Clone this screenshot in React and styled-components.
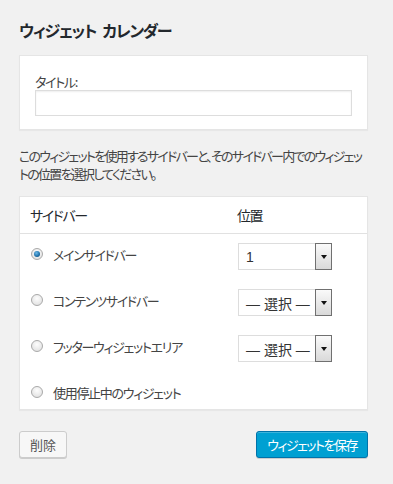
import React from "react"
import styled, { createGlobalStyle } from "styled-components"

const GlobalStyle = createGlobalStyle`
  html, body {
    margin: 0;
    padding: 0;
    background: #f1f1f1;
  }
  body {
    font-family: "Noto Sans CJK JP", "Liberation Sans", sans-serif;
    font-feature-settings: "palt";
    color: #444;
    font-size: 13px;
    letter-spacing: -1.3px;
  }
`

const Page = styled.div`
  width: 393px;
  height: 484px;
  box-sizing: border-box;
  padding: 19px 25px 0 19px;
`

const Heading = styled.h2`
  margin: 0;
  font-size: 16px;
  line-height: 22px;
  font-weight: 700;
  letter-spacing: -1.3px;
  word-spacing: 4px;
  color: #23282d;
`

const Card = styled.div`
  background: #fff;
  border: 1px solid #e5e5e5;
  box-shadow: 0 1px 1px rgba(0, 0, 0, 0.04);
`

const TitleCard = styled(Card)`
  margin-top: 14px;
  padding: 17px 15px 13px;
`

const Label = styled.label`
  display: block;
  line-height: 17px;
  color: #444;
`

const TextInput = styled.input`
  display: block;
  box-sizing: border-box;
  width: 100%;
  height: 26px;
  margin: 0;
  border: 1px solid #ddd;
  box-shadow: inset 0 1px 2px rgba(0, 0, 0, 0.07);
  background: #fff;
  outline: none;
`

const Description = styled.p`
  margin: 17px 0 13px;
  line-height: 18px;
  letter-spacing: -1.75px;
`

const Table = styled(Card)`
  display: grid;
  grid-template-columns: 217px 1fr;
`

const HeadCell = styled.div`
  height: 36px;
  display: flex;
  align-items: center;
  padding-left: ${({ $first }) => ($first ? "10px" : "0")};
  font-size: 14px;
  letter-spacing: -1.4px;
  color: #23282d;
  border-bottom: 1px solid #e1e1e1;
`

const Cell = styled.div`
  padding: ${({ $last }) => ($last ? "9px 0 6px" : "9px 0 10px")};
  padding-left: ${({ $first }) => ($first ? "11px" : "1px")};
  min-height: 22px;
`

const RadioLabel = styled.label`
  display: flex;
  align-items: center;
  gap: 10px;
  height: 22px;
  color: #444;
`

const Radio = styled.span`
  position: relative;
  width: 12px;
  height: 12px;
  border-radius: 50%;
  box-sizing: border-box;
  border: 1px solid #a9a9a9;
  background: radial-gradient(circle at 50% 35%, #fdfdfd 0%, #dcdcdc 100%);
  flex: none;

  &::after {
    content: "";
    display: ${({ $checked }) => ($checked ? "block" : "none")};
    position: absolute;
    left: 2px;
    top: 2px;
    width: 6px;
    height: 6px;
    border-radius: 50%;
    background: radial-gradient(circle at 40% 35%, #6cb8e8 0%, #1d6fa8 60%, #0d3c60 100%);
  }
`

const Select = styled.div`
  position: relative;
  box-sizing: border-box;
  width: 94px;
  height: 27px;
  border: 1px solid #ddd;
  background: #fff;
  display: flex;
  align-items: center;
  padding-left: 7px;
  font-size: 14px;
  letter-spacing: 0;
  color: #333;
  font-family: "Liberation Sans", "Noto Sans CJK JP", sans-serif;
`

const SelectArrow = styled.span`
  position: absolute;
  top: -1px;
  right: -1px;
  bottom: -1px;
  width: 17px;
  box-sizing: border-box;
  border: 1px solid #707070;
  background: linear-gradient(#fafafa, #d9d9d9);
  display: flex;
  align-items: center;
  justify-content: center;

  &::after {
    content: "";
    border-left: 3.5px solid transparent;
    border-right: 3.5px solid transparent;
    border-top: 4px solid #111;
  }
`

const Actions = styled.div`
  display: flex;
  justify-content: space-between;
  margin-top: 21px;
`

const Button = styled.button`
  box-sizing: border-box;
  height: 27px;
  padding: 0 10px;
  border-radius: 3px;
  font-family: inherit;
  font-feature-settings: "palt";
  font-size: 13px;
  letter-spacing: ${({ $primary }) => ($primary ? "-1.5px" : "0")};
  border: 1px solid ${({ $primary }) => ($primary ? "#0073aa" : "#ccc")};
  background: ${({ $primary }) => ($primary ? "#00a0d2" : "#f7f7f7")};
  color: ${({ $primary }) => ($primary ? "#fff" : "#555")};
  box-shadow: ${({ $primary }) =>
    $primary ? "inset 0 1px 0 rgba(120,200,230,.5), 0 1px 0 rgba(0,0,0,.15)" : "0 1px 0 #ccc"};
`

const rows = [
  { name: "メインサイドバー", checked: true, value: "1" },
  { name: "コンテンツサイドバー", value: "— 選択 —" },
  { name: "フッターウィジェットエリア", value: "— 選択 —" },
  { name: "使用停止中のウィジェット" },
]

export default function App() {
  return (
    <Page>
      <GlobalStyle />
      <Heading>ウィジェット カレンダー</Heading>
      <TitleCard>
        <Label>タイトル:</Label>
        <TextInput type="text" />
      </TitleCard>
      <Description>
        このウィジェットを使用するサイドバーと、そのサイドバー内でのウィジェットの位置を選択してください。
      </Description>
      <Table>
        <HeadCell $first>サイドバー</HeadCell>
        <HeadCell>位置</HeadCell>
        {rows.map((row, i) => (
          <React.Fragment key={row.name}>
            <Cell $first $last={i === rows.length - 1}>
              <RadioLabel>
                <Radio $checked={row.checked} />
                {row.name}
              </RadioLabel>
            </Cell>
            <Cell $last={i === rows.length - 1}>
              {row.value && (
                <Select>
                  {row.value}
                  <SelectArrow />
                </Select>
              )}
            </Cell>
          </React.Fragment>
        ))}
      </Table>
      <Actions>
        <Button>削除</Button>
        <Button $primary>ウィジェットを保存</Button>
      </Actions>
    </Page>
  )
}
